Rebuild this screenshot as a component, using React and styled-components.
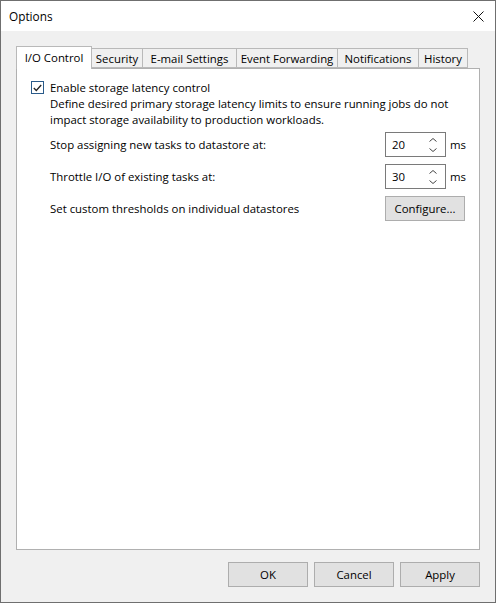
import React, { useState } from "react";
import styled, { createGlobalStyle } from "styled-components";

const GlobalStyle = createGlobalStyle`
  html, body {
    margin: 0;
    padding: 0;
    background: #f0f0f0;
  }
  * {
    box-sizing: border-box;
  }
`;

const FONT = `"Open Sans", "Noto Sans", sans-serif`;
const SIZE = "11.4px";

const Window = styled.div`
  width: 496px;
  height: 603px;
  border: 1px solid #6f6f6f;
  background: #f0f0f0;
  display: flex;
  flex-direction: column;
  font-family: ${FONT};
  font-size: ${SIZE};
  color: #000;
`;

const TitleBar = styled.div`
  height: 30px;
  flex: none;
  background: #fff;
  display: flex;
  align-items: center;
  justify-content: space-between;
  padding: 0 8px 0 8px;
`;

const Title = styled.span`
  font-size: 11.8px;
  padding-bottom: 1px;
`;

const CloseButton = styled.button`
  width: 24px;
  height: 24px;
  border: none;
  background: transparent;
  padding: 0;
  margin-right: -3px;
  display: flex;
  align-items: center;
  justify-content: center;
`;

const Body = styled.div`
  flex: 1;
  display: flex;
  flex-direction: column;
  padding: 15px 15px 0 15px;
`;

const TabStrip = styled.div`
  display: flex;
  align-items: flex-end;
  height: 22px;
  position: relative;
  z-index: 1;
`;

const Tab = styled.div`
  width: ${(p) => p.$w}px;
  height: ${(p) => (p.$active ? 23 : 20)}px;
  margin-bottom: ${(p) => (p.$active ? -1 : 0)}px;
  margin-left: ${(p) => (p.$first ? 0 : -1)}px;
  border: 1px solid #b9b9b9;
  border-bottom: ${(p) => (p.$active ? "none" : "1px solid #b9b9b9")};
  background: ${(p) => (p.$active ? "#fff" : "#f0f0f0")};
  display: flex;
  align-items: ${(p) => (p.$active ? "flex-start" : "center")};
  padding-top: ${(p) => (p.$active ? 3 : 0)}px;
  justify-content: center;
  white-space: nowrap;
  cursor: default;
  position: relative;
  z-index: ${(p) => (p.$active ? 2 : 1)};
`;

const Panel = styled.div`
  height: 482px;
  background: #fff;
  border: 1px solid #b0b0b0;
  padding: 11px 0 0 14px;
  display: flex;
  flex-direction: column;
`;

const CheckRow = styled.label`
  display: flex;
  align-items: flex-start;
  gap: 6px;
  line-height: 16px;
`;

const Box = styled.span`
  width: 13px;
  height: 13px;
  margin-top: 1px;
  border: 1px solid #2a5b8a;
  background: #fff;
  display: flex;
  align-items: center;
  justify-content: center;
  flex: none;
`;

const CheckText = styled.div`
  display: flex;
  flex-direction: column;
`;

const Rows = styled.div`
  display: flex;
  flex-direction: column;
  gap: 7px;
  margin-top: 4px;
  padding-left: 19px;
`;

const Row = styled.div`
  display: grid;
  grid-template-columns: 1fr 94px;
  align-items: center;
  height: 25px;
`;

const Controls = styled.div`
  display: flex;
  align-items: center;
  gap: 4px;
`;

const Spin = styled.div`
  width: 61px;
  height: 25px;
  border: 1px solid #7a7a7a;
  background: #fff;
  display: flex;
  align-items: center;
  padding-left: 6px;
`;

const SpinValue = styled.span`
  flex: 1;
`;

const SpinArrows = styled.div`
  width: 18px;
  height: 23px;
  display: flex;
  align-items: center;
  justify-content: center;
  margin-right: 3px;
`;

const Button = styled.button`
  width: 80px;
  height: 25px;
  border: 1px solid #adadad;
  background: #e1e1e1;
  font-family: ${FONT};
  font-size: ${SIZE};
  color: #000;
  padding: 0 0 1px 0;
`;

const Footer = styled.div`
  display: flex;
  justify-content: flex-end;
  gap: 6px;
  margin-top: 12px;
`;

const tabs = [
  ["I/O Control", 76],
  ["Security", 52],
  ["E-mail Settings", 95],
  ["Event Forwarding", 102],
  ["Notifications", 82],
  ["History", 50],
];

const Arrows = () => (
  <svg width="10" height="16" viewBox="0 0 10 16">
    <path d="M1.5 4.5 L5 1.5 L8.5 4.5" fill="none" stroke="#444" strokeWidth="1" />
    <path d="M1.5 11.5 L5 14.5 L8.5 11.5" fill="none" stroke="#444" strokeWidth="1" />
  </svg>
);

const SpinBox = ({ value }) => (
  <Controls>
    <Spin>
      <SpinValue>{value}</SpinValue>
      <SpinArrows>
        <Arrows />
      </SpinArrows>
    </Spin>
    <span>ms</span>
  </Controls>
);

const App = () => {
  const [active, setActive] = useState(0);
  const [enabled, setEnabled] = useState(true);

  return (
    <>
      <GlobalStyle />
      <Window>
        <TitleBar>
          <Title>Options</Title>
          <CloseButton>
            <svg width="11" height="11" viewBox="0 0 11 11">
              <path d="M0.5 0.5 L10.5 10.5 M10.5 0.5 L0.5 10.5" stroke="#111" strokeWidth="1" />
            </svg>
          </CloseButton>
        </TitleBar>
        <Body>
          <TabStrip>
            {tabs.map(([name, w], i) => (
              <Tab
                key={name}
                $w={w}
                $first={i === 0}
                $active={i === active}
                onClick={() => setActive(i)}
              >
                {name}
              </Tab>
            ))}
          </TabStrip>
          <Panel>
            <CheckRow onClick={() => setEnabled(!enabled)}>
              <Box>
                {enabled && (
                  <svg width="9" height="8" viewBox="0 0 9 8">
                    <path d="M0.8 4 L3.3 6.5 L8.2 1" fill="none" stroke="#222" strokeWidth="1.3" />
                  </svg>
                )}
              </Box>
              <CheckText>
                <span>Enable storage latency control</span>
                <span>
                  Define desired primary storage latency limits to ensure running jobs do not
                </span>
                <span>impact storage availability to production workloads.</span>
              </CheckText>
            </CheckRow>
            <Rows>
              <Row>
                <span>Stop assigning new tasks to datastore at:</span>
                <SpinBox value="20" />
              </Row>
              <Row>
                <span>Throttle I/O of existing tasks at:</span>
                <SpinBox value="30" />
              </Row>
              <Row>
                <span>Set custom thresholds on individual datastores</span>
                <Button>Configure...</Button>
              </Row>
            </Rows>
          </Panel>
          <Footer>
            <Button>OK</Button>
            <Button>Cancel</Button>
            <Button>Apply</Button>
          </Footer>
        </Body>
      </Window>
    </>
  );
};

export default App;
